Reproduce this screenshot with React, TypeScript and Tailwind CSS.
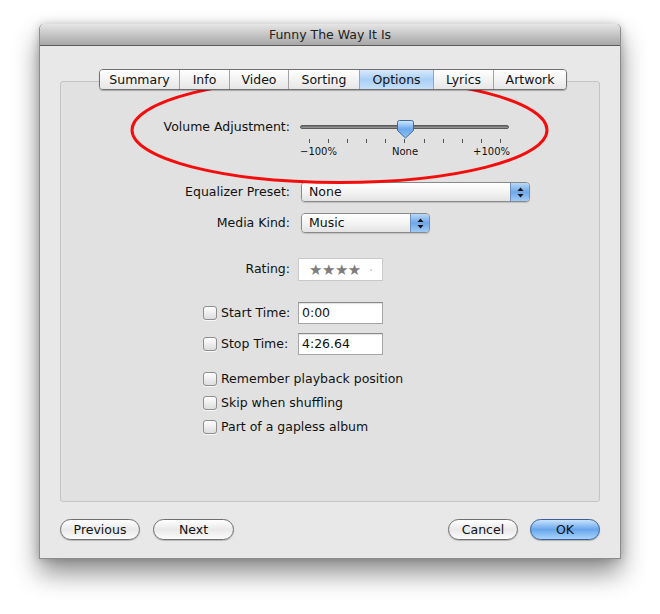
import type { ReactNode } from 'react'

const TABS: { id: string; label: string; w: string }[] = [
  { id: 'summary', label: 'Summary', w: 'w-[79px]' },
  { id: 'info', label: 'Info', w: 'w-[50px]' },
  { id: 'video', label: 'Video', w: 'w-[59px]' },
  { id: 'sorting', label: 'Sorting', w: 'w-[71px]' },
  { id: 'options', label: 'Options', w: 'w-[74px]' },
  { id: 'lyrics', label: 'Lyrics', w: 'w-[60px]' },
  { id: 'artwork', label: 'Artwork', w: 'w-[73px]' },
]

const TICKS = Array.from({ length: 11 }, (_, i) => i)

function Checkbox() {
  return (
    <span className="inline-block h-[14px] w-[14px] shrink-0 rounded-[3px] border border-[#8e8e8e] bg-linear-to-b from-white to-[#dcdcdc] shadow-[0_1px_0_rgba(255,255,255,0.8)]" />
  )
}

function Popup({ value, className }: { value: string; className: string }) {
  return (
    <div
      className={`flex h-[20px] overflow-hidden rounded-[4px] border border-[#8a8a8a] shadow-[0_1px_1px_rgba(0,0,0,0.15)] ${className}`}
    >
      <div className="flex flex-1 items-center bg-linear-to-b from-white via-[#f4f4f4] to-[#e3e3e3] pl-[7px] leading-[18px]">
        {value}
      </div>
      <div className="flex w-[19px] items-center justify-center border-l border-[#6d8fc2] bg-linear-to-b from-[#b9d8f7] via-[#6fa7e8] to-[#9fcaf6]">
        <svg width="7" height="11" viewBox="0 0 7 11">
          <path d="M3.5 0.5 L6.5 4 H0.5 Z" fill="#111" />
          <path d="M3.5 10.5 L6.5 7 H0.5 Z" fill="#111" />
        </svg>
      </div>
    </div>
  )
}

function TextBox({ children }: { children: ReactNode }) {
  return (
    <div className="flex h-[22px] w-[85px] items-center border border-[#a5a5a5] border-t-[#8a8a8a] bg-white pl-[3px] shadow-[inset_0_1px_1px_rgba(0,0,0,0.12)]">
      {children}
    </div>
  )
}

function PillButton({ children, className }: { children: ReactNode; className: string }) {
  return (
    <button
      type="button"
      className={`h-[21px] rounded-full border border-[#6e6e6e] bg-linear-to-b from-white via-[#e9e9e9] to-[#fbfbfb] text-center leading-[19px] shadow-[0_1px_1px_rgba(0,0,0,0.2)] ${className}`}
    >
      {children}
    </button>
  )
}

export default function App() {
  return (
    <div className="relative h-[614px] w-[660px] overflow-hidden bg-white pt-[24px] font-['DejaVu_Sans',sans-serif] text-[12.5px] text-[#111]">
      {/* window */}
      <div className="ml-[39px] flex h-[535px] w-[582px] flex-col rounded-t-[5px] border-x border-b border-[#8c8c8c] bg-[#e8e8e8] shadow-[0_14px_26px_rgba(0,0,0,0.45),0_0_10px_rgba(0,0,0,0.2)]">
        <div className="h-[22px] shrink-0 rounded-t-[5px] border-b border-[#5c5c5c] bg-linear-to-b from-[#e6e6e6] to-[#a7a7a7] text-center leading-[21px] text-[#222]">
          Funny The Way It Is
        </div>

        {/* tab bar */}
        <div className="relative z-10 ml-[59px] mt-[23px] flex h-[21px] w-fit overflow-hidden rounded-[4px] border border-[#707070] shadow-[0_1px_1px_rgba(0,0,0,0.25)]">
          {TABS.map((t, i) => (
            <div
              key={t.id}
              className={`${t.w} text-center leading-[19px] ${i > 0 ? 'border-l border-[#a3a3a3]' : ''} ${
                t.id === 'options'
                  ? 'bg-linear-to-b from-[#d7e9fc] via-[#a9cff6] to-[#c6e0fa]'
                  : 'bg-linear-to-b from-white via-[#f3f3f3] to-[#e6e6e6]'
              }`}
            >
              {t.label}
            </div>
          ))}
        </div>

        {/* group box */}
        <div className="mx-[20px] -mt-[9px] flex h-[421px] flex-col rounded-[3px] border border-[#c4c4c4] bg-[#e1e1e1]">
          {/* volume */}
          <div className="mt-[37px] flex items-start">
            <div className="w-[229px] text-right leading-[16px]">Volume Adjustment:</div>
            <div className="relative ml-[10px] flex w-[210px] flex-col">
              <div className="mt-[6px] h-[4px] w-[209px] rounded-full border border-[#5a5a5a] bg-linear-to-b from-[#6a6a6a] to-[#a0a0a0]" />
              <div className="mt-[10px] flex h-[4px] justify-between px-[9px]">
                {TICKS.map((i) => (
                  <span key={i} className="h-[4px] w-px bg-[#555]" />
                ))}
              </div>
              <div className="mt-[2px] flex justify-between text-[10px] leading-[14px]">
                <span>−100%</span>
                <span>None</span>
                <span>+100%</span>
              </div>
              <svg className="absolute left-[97px] top-px" width="17" height="19" viewBox="0 0 17 19">
                <defs>
                  <linearGradient id="thumb" x1="0" y1="0" x2="0" y2="1">
                    <stop offset="0" stopColor="#d3e8fd" />
                    <stop offset="0.5" stopColor="#6aa8ec" />
                    <stop offset="1" stopColor="#8fc3f5" />
                  </linearGradient>
                </defs>
                <path
                  d="M2.5 0.5 H14.5 Q16.5 0.5 16.5 2.5 V10.5 L8.5 18 L0.5 10.5 V2.5 Q0.5 0.5 2.5 0.5 Z"
                  fill="url(#thumb)"
                  stroke="#3e679f"
                />
              </svg>
            </div>
          </div>

          {/* equalizer */}
          <div className="mt-[23px] flex items-center">
            <div className="w-[229px] text-right">Equalizer Preset:</div>
            <Popup value="None" className="ml-[11px] w-[229px]" />
          </div>

          <div className="mt-[11px] flex items-center">
            <div className="w-[229px] text-right">Media Kind:</div>
            <Popup value="Music" className="ml-[11px] w-[129px]" />
          </div>

          {/* rating */}
          <div className="mt-[25px] flex items-center">
            <div className="w-[229px] text-right">Rating:</div>
            <div className="ml-[8px] flex h-[23px] w-[85px] items-center border border-[#c9c9c9] bg-white pl-[10px] text-[#7e7e7e]">
              <span className="text-[15px] leading-[20px] tracking-[-0.5px]">★★★★</span>
              <span className="ml-[9px] h-[2px] w-[2px] rounded-full bg-[#c4c4c4]" />
            </div>
          </div>

          {/* start / stop */}
          <div className="mt-[21px] flex items-center pl-[142px]">
            <Checkbox />
            <span className="ml-[4px] w-[77px]">Start Time:</span>
            <TextBox>0:00</TextBox>
          </div>

          <div className="mt-[9px] flex items-center pl-[142px]">
            <Checkbox />
            <span className="ml-[4px] w-[77px]">Stop Time:</span>
            <TextBox>4:26.64</TextBox>
          </div>

          {/* options */}
          <div className="mt-[16px] flex flex-col gap-[8px] pl-[142px]">
            {['Remember playback position', 'Skip when shuffling', 'Part of a gapless album'].map((l) => (
              <div key={l} className="flex h-[16px] items-center gap-[4px]">
                <Checkbox />
                <span>{l}</span>
              </div>
            ))}
          </div>
        </div>

        {/* buttons */}
        <div className="mt-[17px] flex items-center px-[20px]">
          <PillButton className="w-[80px]">Previous</PillButton>
          <PillButton className="ml-[13px] w-[81px]">Next</PillButton>
          <div className="flex-1" />
          <PillButton className="w-[70px]">Cancel</PillButton>
          <button
            type="button"
            className="ml-[12px] h-[21px] w-[70px] rounded-full border border-[#3b5e95] bg-linear-to-b from-[#c7e2fc] via-[#68a6ec] to-[#a7d4fb] text-center leading-[19px] shadow-[0_1px_1px_rgba(0,0,0,0.25)]"
          >
            OK
          </button>
        </div>
      </div>

      {/* red annotation ellipse */}
      <svg className="pointer-events-none absolute left-0 top-0" width="660" height="614">
        <ellipse cx="339.5" cy="130" rx="207.5" ry="52.5" fill="none" stroke="#f40d0d" strokeWidth="3" />
      </svg>
    </div>
  )
}
